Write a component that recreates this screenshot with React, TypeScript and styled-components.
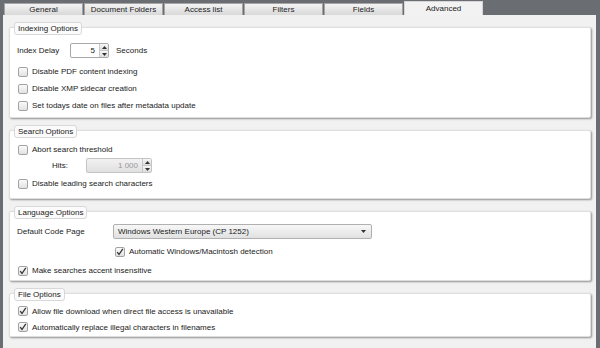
import React from 'react';
import styled, { createGlobalStyle } from 'styled-components';

const GlobalStyle = createGlobalStyle`
  body {
    margin: 0;
    background: #6a6e73;
    font-family: "Liberation Sans", Arial, sans-serif;
  }
`;

const Window = styled.div`
  width: 600px;
  height: 348px;
  background: #6a6e73;
  display: flex;
  flex-direction: column;
  font-size: 8px;
  color: #222;
  overflow: hidden;
`;

const TabBar = styled.div`
  height: 15px;
  display: flex;
  align-items: flex-end;
  gap: 1px;
  padding-left: 4px;
  box-sizing: border-box;
`;

const Tab = styled.div<{ $active?: boolean }>`
  width: 79px;
  height: ${p => (p.$active ? '14px' : '12px')};
  box-sizing: border-box;
  display: flex;
  align-items: center;
  justify-content: center;
  border: 1px solid ${p => (p.$active ? '#d6d6d6' : '#a4a4a4')};
  border-bottom: none;
  background: ${p => (p.$active ? '#f2f2f2' : 'linear-gradient(#f4f4f4, #d8d8d8)')};
  color: #222;
`;

const Panel = styled.div`
  flex: 1;
  margin: 0 4px 0 3px;
  background: #f1f1f1;
  padding: 12px 5px 0 6px;
  display: flex;
  flex-direction: column;
  gap: 12px;
`;

const Group = styled.section<{ $pt: number; $pb: number }>`
  position: relative;
  background: #fff;
  border: 1px solid #dedede;
  border-radius: 2px;
  box-shadow: 1px 1px 2px rgba(0, 0, 0, 0.4);
  padding: ${p => p.$pt}px 0 ${p => p.$pb}px 0;
  display: flex;
  flex-direction: column;
`;

const Legend = styled.div`
  position: absolute;
  top: -6px;
  left: 4px;
  height: 11px;
  padding: 0 3px;
  display: flex;
  align-items: center;
  background: #fbfbfb;
  border: 1px solid #d8d8d8;
  border-radius: 3px;
`;

const Row = styled.div<{ $h?: number; $indent?: number; $mt?: number }>`
  display: flex;
  align-items: center;
  height: ${p => p.$h ?? 17}px;
  padding-left: ${p => p.$indent ?? 8}px;
  margin-top: ${p => p.$mt ?? 0}px;
  gap: 4px;
`;

const FieldRow = styled(Row)`
  gap: 0;
`;

const Label = styled.span<{ $w: number }>`
  width: ${p => p.$w}px;
  flex: none;
`;

const Unit = styled.span`
  margin-left: 7px;
`;

const Box = styled.span`
  width: 10px;
  height: 10px;
  box-sizing: border-box;
  border: 1px solid #a3a3a3;
  border-radius: 2px;
  background: linear-gradient(#fafafa, #e2e2e2);
  display: flex;
  align-items: center;
  justify-content: center;
  flex: none;
`;

const Spin = styled.div<{ $w: number; $disabled?: boolean }>`
  width: ${p => p.$w}px;
  height: 15px;
  box-sizing: border-box;
  border: 1px solid ${p => (p.$disabled ? '#c4c4c4' : '#a8a8a8')};
  border-radius: 2px;
  background: ${p => (p.$disabled ? 'linear-gradient(#f2f2f2, #e0e0e0)' : '#fff')};
  color: ${p => (p.$disabled ? '#999' : '#222')};
  display: flex;
  flex: none;
`;

const SpinValue = styled.span`
  flex: 1;
  text-align: right;
  padding-right: 4px;
  line-height: 13px;
`;

const SpinButtons = styled.div`
  width: 8px;
  display: flex;
  flex-direction: column;
  border-left: 1px solid #c8c8c8;
`;

const SpinHalf = styled.div<{ $up?: boolean }>`
  flex: 1;
  display: flex;
  align-items: center;
  justify-content: center;
  background: linear-gradient(#f6f6f6, #dcdcdc);
  border-bottom: ${p => (p.$up ? '1px solid #c8c8c8' : 'none')};
`;

const Select = styled.div`
  width: 259px;
  height: 15px;
  box-sizing: border-box;
  border: 1px solid #b0b0b0;
  border-radius: 2px;
  background: linear-gradient(#f7f7f7, #e1e1e1);
  display: flex;
  align-items: center;
  justify-content: space-between;
  padding: 0 5px 0 4px;
`;

const Arrow = ({ up, size = 2 }: { up?: boolean; size?: number }) => (
  <svg width={size * 2 + 1} height={size + 1} viewBox={`0 0 ${size * 2 + 1} ${size + 1}`}>
    <polygon
      points={up ? `0,${size + 1} ${size * 2 + 1},${size + 1} ${size + 0.5},0` : `0,0 ${size * 2 + 1},0 ${size + 0.5},${size + 1}`}
      fill="#333"
    />
  </svg>
);

const Check = ({ checked, label }: { checked?: boolean; label: string }) => (
  <>
    <Box>
      {checked && (
        <svg width="8" height="8" viewBox="0 0 8 8">
          <polyline points="1.2,4.2 3,6.5 6.8,0.8" fill="none" stroke="#333" strokeWidth="1.3" />
        </svg>
      )}
    </Box>
    <span>{label}</span>
  </>
);

const SpinBox = ({ value, width, disabled }: { value: string; width: number; disabled?: boolean }) => (
  <Spin $w={width} $disabled={disabled}>
    <SpinValue>{value}</SpinValue>
    <SpinButtons>
      <SpinHalf $up><Arrow up /></SpinHalf>
      <SpinHalf><Arrow /></SpinHalf>
    </SpinButtons>
  </Spin>
);

const tabs = ['General', 'Document Folders', 'Access list', 'Filters', 'Fields', 'Advanced'];

export default function App() {
  return (
    <>
      <GlobalStyle />
      <Window>
        <TabBar>
          {tabs.map(t => (
            <Tab key={t} $active={t === 'Advanced'}>{t}</Tab>
          ))}
        </TabBar>
        <Panel>
          <Group $pt={15} $pb={3}>
            <Legend>Indexing Options</Legend>
            <FieldRow $h={15} $indent={7}>
              <Label $w={53}>Index Delay</Label>
              <SpinBox value="5" width={39} />
              <Unit>Seconds</Unit>
            </FieldRow>
            <Row $mt={5}><Check label="Disable PDF content indexing" /></Row>
            <Row><Check label="Disable XMP sidecar creation" /></Row>
            <Row><Check label="Set todays date on files after metadata update" /></Row>
          </Group>

          <Group $pt={10} $pb={6}>
            <Legend>Search Options</Legend>
            <Row><Check label="Abort search threshold" /></Row>
            <FieldRow $h={15} $indent={42}>
              <Label $w={34}>Hits:</Label>
              <SpinBox value="1 000" width={66} disabled />
            </FieldRow>
            <Row $mt={2}><Check label="Disable leading search characters" /></Row>
          </Group>

          <Group $pt={12} $pb={1}>
            <Legend>Language Options</Legend>
            <FieldRow $h={15} $indent={7}>
              <Label $w={96}>Default Code Page</Label>
              <Select>
                <span>Windows Western Europe (CP 1252)</span>
                <Arrow />
              </Select>
            </FieldRow>
            <Row $mt={4} $indent={105}><Check checked label="Automatic Windows/Macintosh detection" /></Row>
            <Row $mt={2}><Check checked label="Make searches accent insensitive" /></Row>
          </Group>

          <Group $pt={9} $pb={1}>
            <Legend>File Options</Legend>
            <Row $h={16}><Check checked label="Allow file download when direct file access is unavailable" /></Row>
            <Row $h={16}><Check checked label="Automatically replace illegal characters in filenames" /></Row>
          </Group>
        </Panel>
      </Window>
    </>
  );
}
